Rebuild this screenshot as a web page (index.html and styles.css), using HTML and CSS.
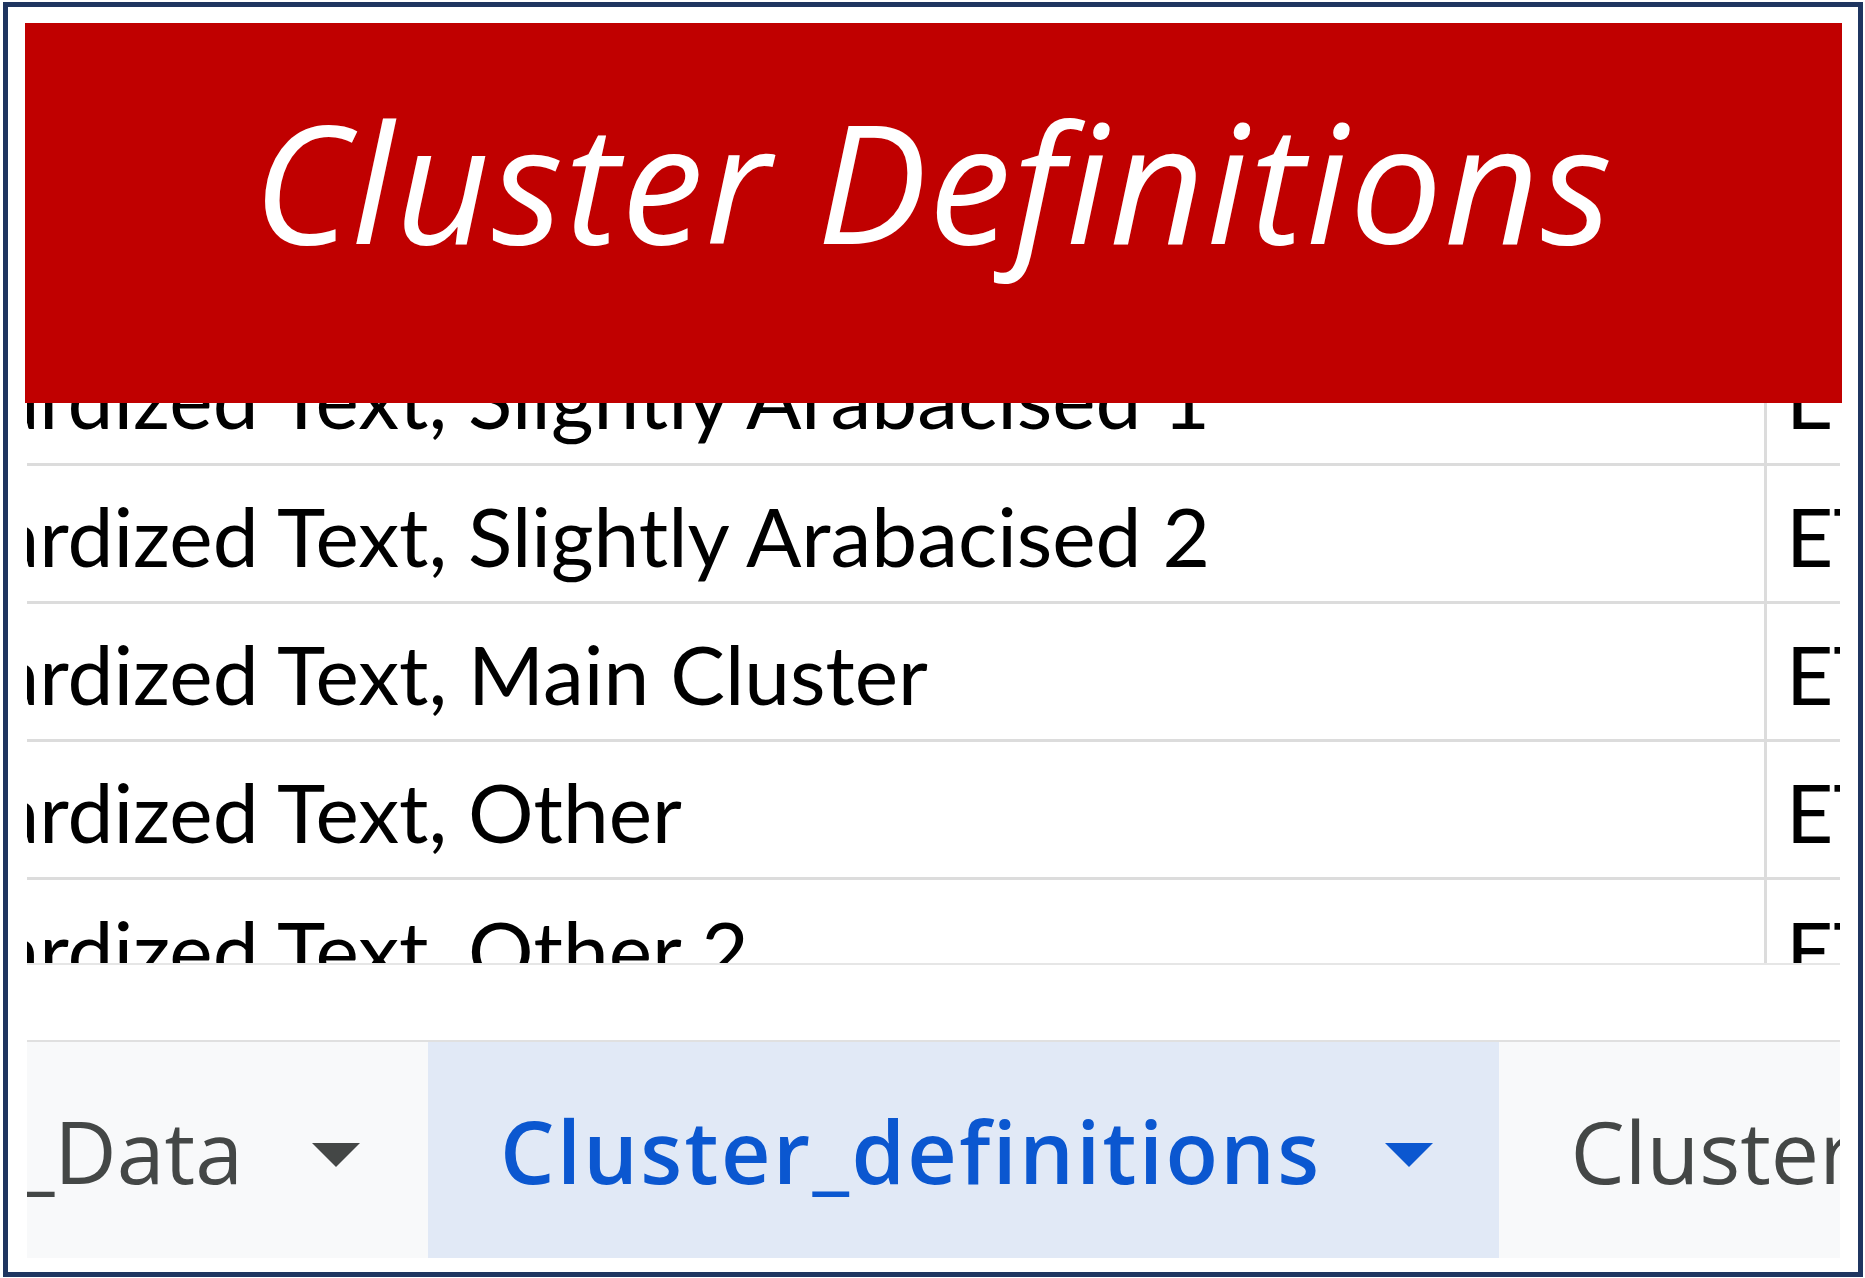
FILE: index.html
```html
<!DOCTYPE html>
<html lang="en">
<head>
<meta charset="utf-8">
<title>Cluster Definitions</title>
<link rel="stylesheet" href="styles.css">
</head>
<body>
<div class="frame">
  <div class="sheet">
    <div class="row">
      <div class="c1"><span class="txt">Standardized Text, Slightly Arabacised 1</span></div>
      <div class="c2">ET</div>
    </div>
    <div class="row">
      <div class="c1"><span class="txt">Standardized Text, Slightly Arabacised 2</span></div>
      <div class="c2">ET</div>
    </div>
    <div class="row">
      <div class="c1"><span class="txt">Standardized Text, Main Cluster</span></div>
      <div class="c2">ET</div>
    </div>
    <div class="row">
      <div class="c1"><span class="txt">Standardized Text, Other</span></div>
      <div class="c2">ET</div>
    </div>
    <div class="row">
      <div class="c1"><span class="txt">Standardized Text, Other 2</span></div>
      <div class="c2">ET</div>
    </div>
  </div>
  <div class="tabbar">
    <div class="tab-clip">
      <div class="tab">
        <span class="tab-name">Raw_Data</span>
        <svg class="arrow" viewBox="0 0 48 24" width="48" height="24"><path d="M0 0h48L24 24z"/></svg>
      </div>
    </div>
    <div class="tab active">
      <span class="tab-name">Cluster_definitions</span>
      <svg class="arrow" viewBox="0 0 48 24" width="48" height="24"><path d="M0 0h48L24 24z"/></svg>
    </div>
    <div class="tab">
      <span class="tab-name">Clusters</span>
      <svg class="arrow" viewBox="0 0 48 24" width="48" height="24"><path d="M0 0h48L24 24z"/></svg>
    </div>
  </div>
  <div class="banner">Cluster Definitions</div>
</div>
</body>
</html>
```

FILE: styles.css
```css
* {
  box-sizing: border-box;
  margin: 0;
  padding: 0;
}

html, body {
  background: #ffffff;
}

body {
  width: 1865px;
  height: 1278px;
  overflow: hidden;
  padding: 2px 2px 1px 3px;
}

.frame {
  position: relative;
  width: 1860px;
  height: 1275px;
  border: 5px solid #1f3560;
  padding: 0 18px 14px 19px;
  display: flex;
  flex-direction: column;
  background: #ffffff;
}

/* spreadsheet grid */
.sheet {
  flex-shrink: 0;
  height: 958px;
  overflow: hidden;
  padding-top: 321px;
  border-bottom: 2px solid #e6e6e6;
  font-family: Lato, "Open Sans", sans-serif;
  font-size: 82px;
  line-height: 1.2;
  color: #000000;
}

.row {
  display: flex;
  height: 138px;
  border-bottom: 3px solid #dcdcdc;
}

.c1 {
  width: 1740px;
  flex-shrink: 0;
  border-right: 3px solid #dcdcdc;
  overflow: hidden;
  white-space: nowrap;
  display: flex;
  align-items: flex-end;
  padding-bottom: 17px;
}

.txt {
  margin-left: -233px;
}

.c2 {
  flex: 1;
  overflow: hidden;
  white-space: nowrap;
  display: flex;
  align-items: flex-end;
  padding-left: 19px;
  padding-bottom: 17px;
}

/* sheet tabs */
.tabbar {
  flex-shrink: 0;
  margin-top: 75px;
  height: 218px;
  border-top: 2px solid #e0e0e0;
  background: #f8f9fa;
  display: flex;
  overflow: hidden;
}

.tab-clip {
  width: 401px;
  flex-shrink: 0;
  overflow: hidden;
  display: flex;
  justify-content: flex-end;
}

.tab {
  flex-shrink: 0;
  display: flex;
  align-items: center;
  gap: 69px;
  padding: 0 68px 0 72px;
  white-space: nowrap;
  font-family: "Open Sans", Roboto, sans-serif;
  font-size: 86px;
  color: #444746;
}

.arrow {
  display: block;
  margin-top: 10px;
  fill: #444746;
}

.tab.active {
  background: #e1e9f6;
  color: #0b57d0;
  font-weight: 600;
  letter-spacing: 2.4px;
  gap: 63px;
  padding-right: 66px;
}

.tab.active .arrow {
  fill: #0b57d0;
}

/* title banner over the screenshot */
.banner {
  position: absolute;
  left: 17px;
  top: 16px;
  width: 1817px;
  height: 380px;
  background: #c00000;
  color: #ffffff;
  font-family: "Open Sans", "Noto Sans", sans-serif;
  font-style: italic;
  font-weight: 400;
  font-size: 165px;
  line-height: 1;
  letter-spacing: 1.8px;
  font-variant-ligatures: none;
  text-align: center;
  padding-top: 75px;
  white-space: nowrap;
}
```
